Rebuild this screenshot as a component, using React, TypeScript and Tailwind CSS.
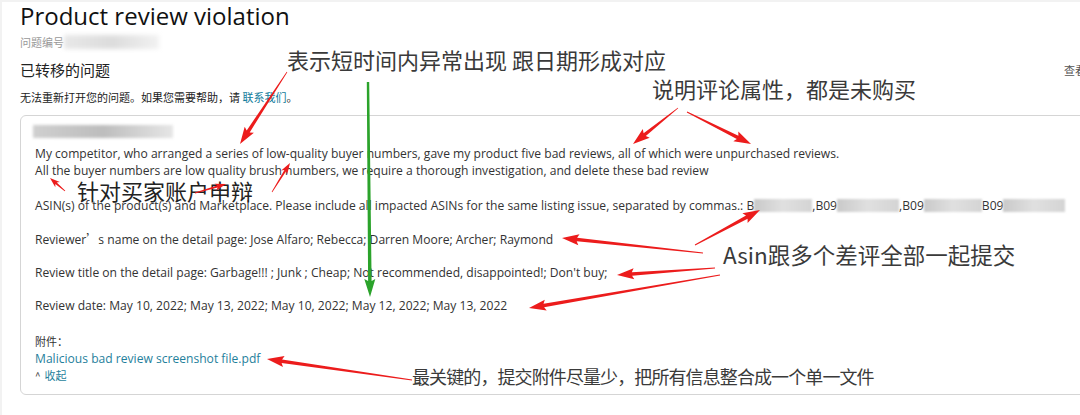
import React from "react";

type Arrow = { x1: number; y1: number; x2: number; y2: number; w0?: number; w1?: number; hw?: number; hl?: number; color?: string };

function arrowPoints(a: Arrow): string {
  const { x1, y1, x2, y2 } = a;
  const w0 = a.w0 ?? 0.8;
  const w1 = a.w1 ?? 3.5;
  const hw = a.hw ?? 11;
  const hl = a.hl ?? 15;
  const dx = x2 - x1;
  const dy = y2 - y1;
  const len = Math.hypot(dx, dy);
  const ux = dx / len;
  const uy = dy / len;
  const nx = -uy;
  const ny = ux;
  const bx = x2 - ux * hl;
  const by = y2 - uy * hl;
  const pts: [number, number][] = [
    [x1 + (nx * w0) / 2, y1 + (ny * w0) / 2],
    [bx + (nx * w1) / 2, by + (ny * w1) / 2],
    [bx - ux * 2 + (nx * hw) / 2, by - uy * 2 + (ny * hw) / 2],
    [x2, y2],
    [bx - ux * 2 - (nx * hw) / 2, by - uy * 2 - (ny * hw) / 2],
    [bx - (nx * w1) / 2, by - (ny * w1) / 2],
    [x1 - (nx * w0) / 2, y1 - (ny * w0) / 2],
  ];
  return pts.map((p) => `${p[0].toFixed(1)},${p[1].toFixed(1)}`).join(" ");
}

const redArrows: Arrow[] = [
  { x1: 287, y1: 72, x2: 240, y2: 144 },
  { x1: 678, y1: 108, x2: 633, y2: 144 },
  { x1: 687, y1: 112, x2: 751, y2: 144 },
  { x1: 65, y1: 191, x2: 50, y2: 178, hw: 7, hl: 8, w1: 2 },
  { x1: 195, y1: 193, x2: 226, y2: 184, hw: 7, hl: 9, w1: 2 },
  { x1: 272, y1: 192, x2: 290, y2: 163, hw: 7, hl: 9, w1: 2 },
  { x1: 695, y1: 245, x2: 760, y2: 210 },
  { x1: 703, y1: 253, x2: 562, y2: 238 },
  { x1: 715, y1: 268, x2: 617, y2: 275 },
  { x1: 720, y1: 275, x2: 529, y2: 308 },
  { x1: 412, y1: 380, x2: 267, y2: 359 },
];

const body = { fontFamily: '"Open Sans", "Noto Sans CJK SC", sans-serif' };
const cjk = { fontFamily: '"Noto Sans CJK SC", "Noto Sans", sans-serif' };

function Blur({ w, className = "" }: { w: number; className?: string }) {
  return (
    <span
      className={"inline-block align-middle h-[13px] bg-gradient-to-r from-[#c9c9c9] via-[#e0e0e0] to-[#d4d4d4] blur-[1px] " + className}
      style={{ width: w }}
    />
  );
}

export default function App() {
  return (
    <div className="relative w-[1080px] h-[415px] overflow-hidden bg-[#f2f2f2]">
      <div className="absolute left-[2px] top-[2px] w-[1100px] h-[413px] bg-white">
        <div className="pl-[18px] w-[1100px]" style={body}>
          <div className="text-[24px] leading-[28px] text-[#111]">Product review violation</div>
          <div className="flex items-center mt-[5px] h-[14px]">
            <span className="text-[11px] text-[#999]" style={cjk}>问题编号</span>
            <span className="inline-block w-[95px] h-[14px] bg-gradient-to-r from-[#e8e8e8] via-[#dcdcdc] to-[#f2f2f2] blur-[2px]" />
          </div>
          <div className="flex justify-between items-center mt-[10px] w-[1066px]">
            <span className="text-[15px] text-[#222]" style={cjk}>已转移的问题</span>
            <span className="text-[11px] text-[#555]" style={cjk}>查看</span>
          </div>
          <div className="mt-[7px] text-[11px] text-[#222]" style={cjk}>
            无法重新打开您的问题。如果您需要帮助，请 <span className="text-[#0e7a9a]">联系我们</span>。
          </div>
          <div className="mt-[10px] w-[1078px] border border-[#d5d5d5] rounded-[6px] pl-[14px] pt-[9px] pb-[10px] text-[12.1px] leading-[17px] text-[#333]">
            <div className="w-[140px] h-[13px] bg-gradient-to-r from-[#cfcfcf] via-[#bdbdbd] to-[#e6e6e6] blur-[1.5px] -ml-[2px]" />
            <p className="mt-[7px]">
              My competitor, who arranged a series of low-quality buyer numbers, gave my product five bad reviews, all of which were unpurchased reviews.
            </p>
            <p>All the buyer numbers are low quality brush numbers, we require a thorough investigation, and delete these bad review</p>
            <p className="mt-[18px] flex items-center whitespace-nowrap">
              <span>ASIN(s) of the product(s) and Marketplace. Please include all impacted ASINs for the same listing issue, separated by commas.: B</span>
              <Blur w={58} />
              <span>,B09</span>
              <Blur w={62} />
              <span>,B09</span>
              <Blur w={58} />
              <span>B09</span>
              <Blur w={62} />
            </p>
            <p className="mt-[16px]">
              Reviewer<span style={cjk}>’</span>s name on the detail page: Jose Alfaro; Rebecca; Darren Moore; Archer; Raymond
            </p>
            <p className="mt-[16px]">Review title on the detail page: Garbage!!! ; Junk ; Cheap; Not recommended, disappointed!; Don't buy;</p>
            <p className="mt-[16px]">Review date: May 10, 2022; May 13, 2022; May 10, 2022; May 12, 2022; May 13, 2022</p>
            <p className="mt-[18px] text-[#333]" style={cjk}><span className="text-[11px]">附件：</span></p>
            <p className="text-[#1f7f9c]">Malicious bad review screenshot file.pdf</p>
            <p className="text-[#1f7f9c] text-[11px] flex items-center gap-[4px]" style={cjk}>
              <span className="text-[#333] text-[10px]">^</span>
              <span>收起</span>
            </p>
          </div>
        </div>
      </div>

      {/* annotations overlay */}
      <div className="absolute left-[287px] top-[45px] text-[22px] leading-[28px] text-[#3a3a3a] whitespace-nowrap" style={cjk}>
        表示短时间内异常出现 跟日期形成对应
      </div>
      <div className="absolute left-[652px] top-[74px] text-[22px] leading-[28px] text-[#3a3a3a] whitespace-nowrap" style={cjk}>
        说明评论属性，都是未购买
      </div>
      <div className="absolute left-[77px] top-[176px] text-[22px] leading-[28px] text-[#222] whitespace-nowrap" style={cjk}>
        针对买家账户申辩
      </div>
      <div className="absolute left-[723px] top-[240px] text-[22.5px] leading-[28px] text-[#3a3a3a] whitespace-nowrap" style={cjk}>
        Asin跟多个差评全部一起提交
      </div>
      <div className="absolute left-[412px] top-[362px] text-[18px] leading-[28px] text-[#3a3a3a] whitespace-nowrap tracking-[-0.9px]" style={cjk}>
        最关键的，提交附件尽量少，把所有信息整合成一个单一文件
      </div>

      <svg className="absolute inset-0 pointer-events-none" width="1080" height="415" viewBox="0 0 1080 415">
        <polygon points={arrowPoints({ x1: 368, y1: 82, x2: 370, y2: 297, w0: 2.5, w1: 3.5, hw: 11, hl: 16 })} fill="#2ba32b" />
        {redArrows.map((a, i) => (
          <polygon key={i} points={arrowPoints(a)} fill="#ec1c1c" />
        ))}
      </svg>
    </div>
  );
}
